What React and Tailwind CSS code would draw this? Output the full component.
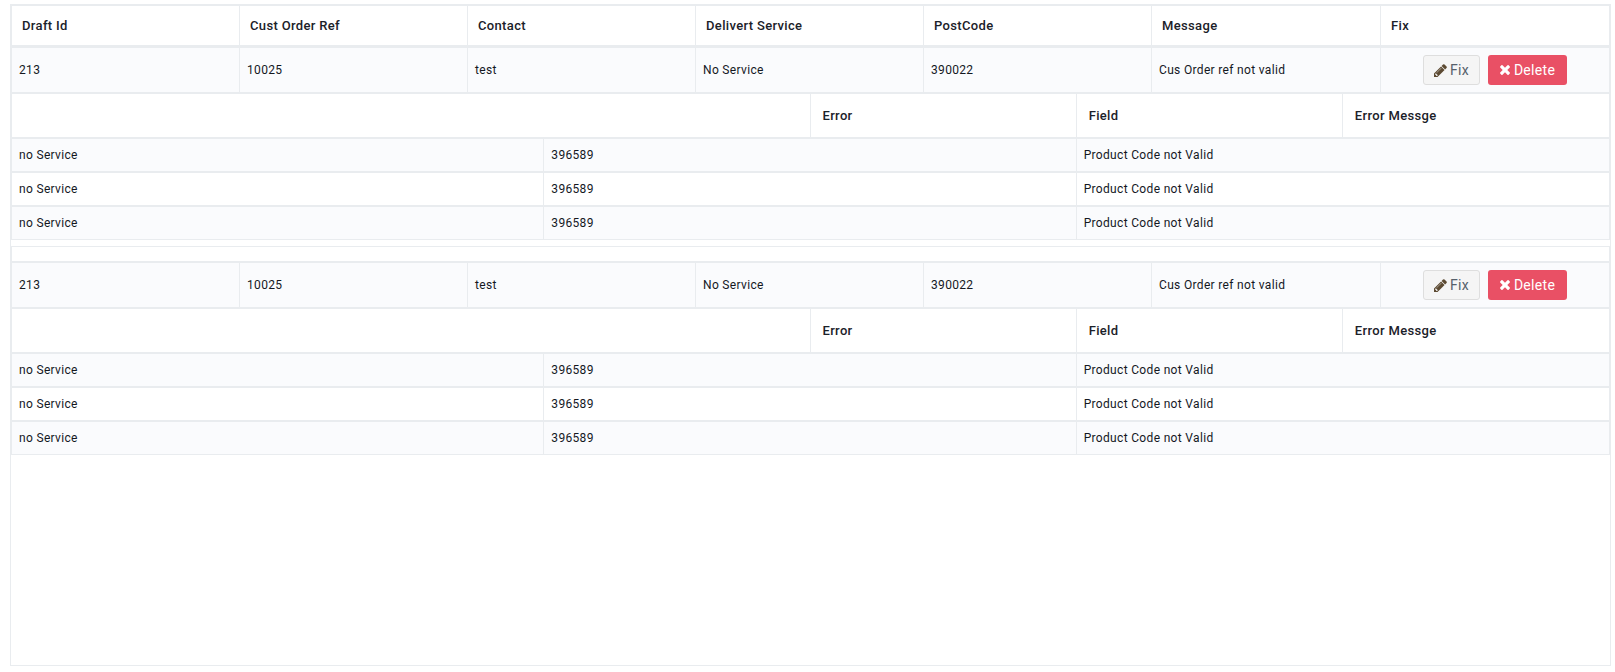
const colsA = ["Draft Id", "Cust Order Ref", "Contact", "Delivert Service", "PostCode", "Message", "Fix"];
const rowA = ["213", "10025", "test", "No Service", "390022", "Cus Order ref not valid"];
const b = "border-[#e9ecef]";
const cell = "text-[12px] text-[#14181f] tracking-[0.33px]";
const head = "text-[13px] font-medium text-[#1b2129] tracking-[0.34px]";
const cols = "grid-cols-[228px_228px_228px_228px_228px_229px_1fr]";

function Pencil() {
  return (
    <svg width="13" height="13" viewBox="0 0 1536 1536" className="mr-[3px]" fill="#5c4a32">
      <path d="M363 1408l91-91-235-235-91 91v107h128v128h107zm523-928q0-22-22-22-10 0-17 7L305 1007q-7 7-7 17 0 22 22 22 10 0 17-7l542-542q7-7 7-17zm-54-192l416 416-832 832H0v-416zm683 96q0 53-37 90l-166 166-416-416 166-165q36-38 90-38 53 0 91 38l235 234q37 39 37 91z" />
    </svg>
  );
}

function Times() {
  return (
    <svg width="10" height="10" viewBox="0 0 1188 1188" className="mr-[4px]" fill="currentColor">
      <path d="M1188 956q0 40-28 68l-136 136q-28 28-68 28t-68-28L594 866l-294 294q-28 28-68 28t-68-28L28 1024Q0 996 0 956t28-68l294-294L28 300Q0 272 0 232t28-68L164 28q28-28 68-28t68 28l294 294L888 28q28-28 68-28t68 28l136 136q28 28 28 68t-28 68L866 594l294 294q28 28 28 68z" />
    </svg>
  );
}

function Block() {
  return (
    <div>
      <div className={`grid ${cols} h-[46px] bg-[#fafbfd] border-b-2 ${b}`}>
        {rowA.map((t, i) => (
          <div key={i} className={`flex items-center pl-[7px] border-r ${b} ${cell}`}>{t}</div>
        ))}
        <div className="flex items-center justify-center gap-2">
          <button className="flex items-center justify-center w-[57px] h-[30px] rounded-[3px] border border-[#dedede] bg-[#f5f5f5] text-[14px] text-[#56606b] tracking-[0.3px]">
            <Pencil />Fix
          </button>
          <button className="flex items-center justify-center w-[79px] h-[30px] rounded-[3px] bg-[#e95065] text-[14px] text-white tracking-[0.3px]">
            <Times />Delete
          </button>
        </div>
      </div>
      <div className={`grid grid-cols-[3fr_1fr_1fr_1fr] h-[45px] border-b-2 ${b}`}>
        {["", "Error", "Field", "Error Messge"].map((t, i) => (
          <div key={i} className={`flex items-center pl-[12px] ${i < 3 ? "border-r" : ""} ${b} ${head}`}>{t}</div>
        ))}
      </div>
      {[0, 1, 2].map((r) => (
        <div key={r} className={`grid grid-cols-3 ${r === 2 ? "h-[33px] border-b" : "h-[34px] border-b-2"} ${b} ${r === 1 ? "bg-white" : "bg-[#fafbfd]"}`}>
          {["no Service", "396589", "Product Code not Valid"].map((t, i) => (
            <div key={i} className={`flex items-center pl-[7px] ${i < 2 ? "border-r" : ""} ${b} ${cell}`}>{t}</div>
          ))}
        </div>
      ))}
    </div>
  );
}

export default function App() {
  return (
    <div className="h-[672px] bg-white pl-[10px] pt-[4px] font-['Roboto',sans-serif]">
      <div className={`w-[1601px] h-[662px] border ${b}`}>
        <div className={`border-x border-t ${b}`}>
          <div className={`grid ${cols} h-[42px] border-b-[3px] ${b}`}>
            {colsA.map((t, i) => (
              <div key={i} className={`flex items-center pl-[10px] ${i < 6 ? "border-r" : ""} ${b} ${head}`}>{t}</div>
            ))}
          </div>
          <Block />
        </div>
        <div className="h-[6px]" />
        <div className={`border-x border-t ${b}`}>
          <div className={`h-[16px] border-b-2 ${b}`} />
          <Block />
        </div>
      </div>
    </div>
  );
}
